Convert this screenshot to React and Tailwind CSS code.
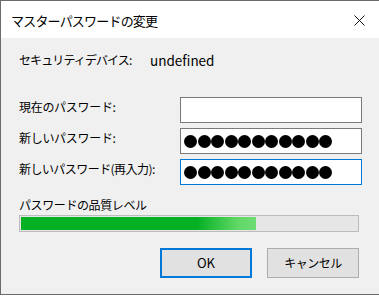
import React from "react";

const font = { fontFamily: '"Noto Sans CJK JP", "Noto Sans", sans-serif' };

function Dots() {
  return (
    <div className="flex items-center gap-[0.5px] pl-[3px]">
      {Array.from({ length: 11 }).map((_, i) => (
        <div key={i} className="w-[13px] h-[13px] rounded-full bg-black" />
      ))}
    </div>
  );
}

export default function App() {
  return (
    <div className="w-[379px] h-[296px] bg-white overflow-hidden text-[12px] text-black" style={font}>
      <div className="w-[379px] h-[295px] border-t border-l border-b border-[#6b6b6b] bg-[#f0f0f0] flex flex-col">
        <div className="h-[37px] bg-white flex items-center justify-between pl-[10px] pr-[14px]">
          <span className="text-[13px] tracking-[-0.8px] pt-[2px]">マスターパスワードの変更</span>
          <svg width="11" height="11" viewBox="0 0 11 11" className="mt-[1px]">
            <path d="M0.5 0.5 L10.5 10.5 M10.5 0.5 L0.5 10.5" stroke="#111" strokeWidth="1" />
          </svg>
        </div>
        <div className="pl-[18px] flex flex-col">
          <div className="h-[44px] flex items-center">
            <span className="w-[131px] tracking-[-0.9px]">セキュリティデバイス:</span>
            <span className="text-[13.5px]">undefined</span>
          </div>
          <div className="mt-[15px] flex flex-col gap-[5px]">
            <div className="flex items-center h-[26px]">
              <span className="w-[161px] tracking-[-0.3px] pb-[6px]">現在のパスワード:</span>
              <div className="w-[182px] h-[26px] bg-white border border-[#7a7a7a]" />
            </div>
            <div className="flex items-center h-[26px]">
              <span className="w-[161px] tracking-[-0.3px] pb-[6px]">新しいパスワード:</span>
              <div className="w-[182px] h-[26px] bg-white border border-[#7a7a7a] flex items-center">
                <Dots />
              </div>
            </div>
            <div className="flex items-center h-[26px]">
              <span className="w-[161px] tracking-[-0.55px] pb-[6px]">新しいパスワード(再入力):</span>
              <div className="w-[182px] h-[26px] bg-white border border-[#0078d7] flex items-center">
                <Dots />
              </div>
            </div>
          </div>
          <div className="mt-[10px] h-[20px] flex items-center tracking-[-0.4px]">パスワードの品質レベル</div>
          <div className="w-[340px] h-[17px] border border-[#bcbcbc] bg-[#e6e6e6] p-[1px]">
            <div className="h-full w-[235px] bg-[linear-gradient(to_right,#06b025_0%,#06b025_75%,#5fd865_92%,#6fdc75_100%)]" />
          </div>
          <div className="mt-[16px] flex gap-[15px] pl-[141px]">
            <button className="w-[92px] h-[30px] bg-[#e1e1e1] border-2 border-[#0078d7] flex items-center justify-center text-[13px]">OK</button>
            <button className="w-[92px] h-[30px] bg-[#e1e1e1] border border-[#adadad] flex items-center justify-center tracking-[-0.5px]">キャンセル</button>
          </div>
        </div>
      </div>
    </div>
  );
}
